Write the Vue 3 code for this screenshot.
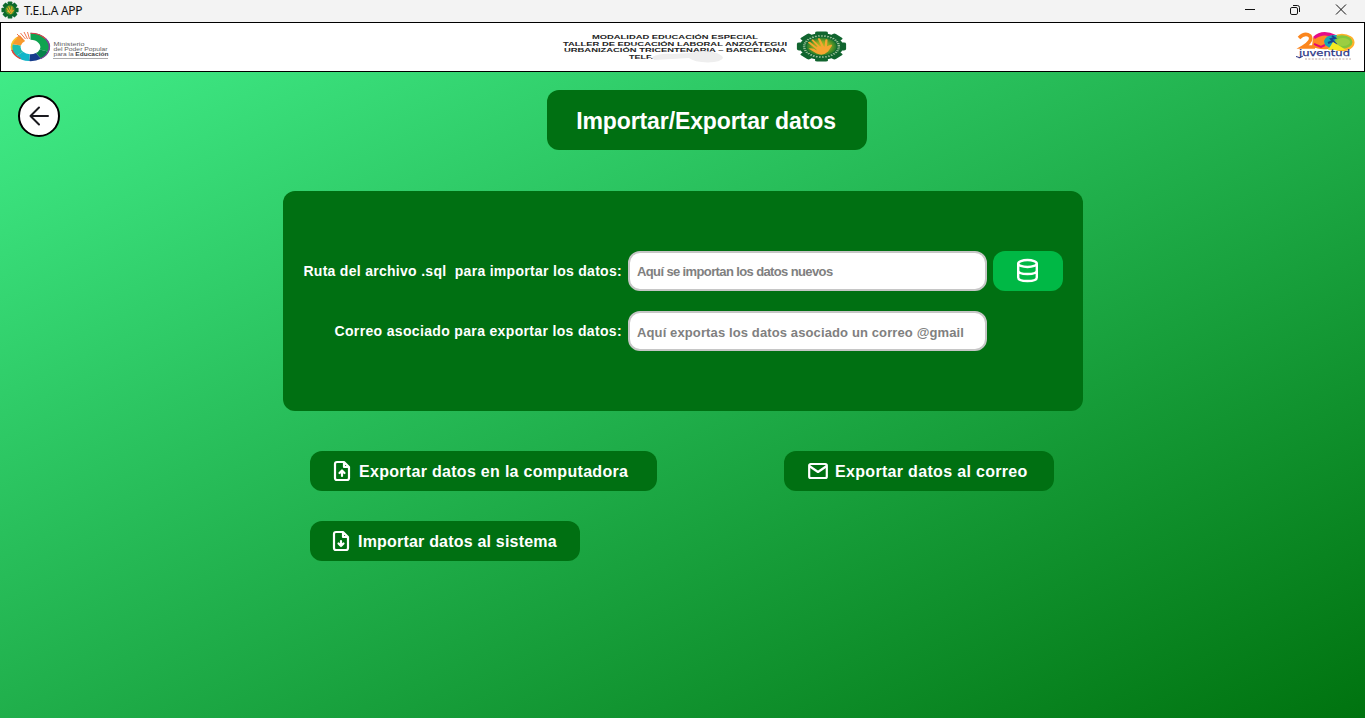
<script setup>
const teeth = [0, 45, 90, 135, 180, 225, 270, 315]
</script>

<template>
  <div class="window">
    <div class="titlebar">
      <svg class="app-icon" viewBox="-10 -10 20 20">
        <rect v-for="a in teeth" :key="a" x="-2.6" y="-9.500" width="5.2" height="5" rx="1" fill="#0d6a2e" :transform="`rotate(${a})`" />
        <circle r="7.3" fill="#0d6a2e" />
        <circle r="5.2" fill="#4f9420" />
        <path d="M-3.500 -2L0 3M-1.500 -4L1 2M2 -4L2 2M-3 1L1 4L4 0" stroke="#f2a92e" stroke-width="1.2" fill="none" />
      </svg>
      <span class="app-name">T.E.L.A APP</span>
      <div class="controls">
        <svg viewBox="0 0 12 12"><path d="M1 5.5H11" /></svg>
        <svg viewBox="0 0 12 12"><rect x="1.5" y="3.5" width="7" height="7" rx="1.4" /><path d="M4 1.5H8.4Q10.5 1.5 10.5 3.6V8" /></svg>
        <svg viewBox="0 0 12 12"><path d="M1 .5L11 10.5M11 .5L1 10.5" /></svg>
      </div>
    </div>

    <header class="banner">
      <svg class="ministry" width="104" height="40" viewBox="0 0 104 40">
        <g transform="translate(20.500 20) scale(1 .73)" fill="none" stroke-width="9.500">
          <path d="M0 -14.600A14.600 14.600 0 0 1 13.700 5" stroke="#10a350" />
          <path d="M13.700 5A14.600 14.600 0 0 1 8 12.200" stroke="#07824b" />
          <path d="M8 12.200A14.600 14.600 0 0 1 -1 14.600" stroke="#163c8c" />
          <path d="M-1 14.600A14.600 14.600 0 0 1 -11 9.600" stroke="#12b5c9" />
          <path d="M-11 9.600A14.600 14.600 0 0 1 -14.300 -3" stroke="#1dbcb0" />
          <path d="M-14.300 -3A14.600 14.600 0 0 1 -8 -12.200" stroke="#f79a2d" />
          <path d="M0 -18.800A18.800 18.800 0 0 1 15 -11.400" stroke="#e23a4e" stroke-width="1.600" />
          <path d="M15 -11.400A18.800 18.800 0 0 1 10 16" stroke="#80439b" stroke-width="1.600" />
          <path d="M-10 16A18.800 18.800 0 0 1 -18.500 4" stroke="#e94435" stroke-width="1.600" />
          <path d="M-18.500 4A18.800 18.800 0 0 1 -14 -12.500" stroke="#f8c72d" stroke-width="1.600" />
        </g>
        <path d="M13 13L7 7M15.500 12L10.500 6M17.500 12L14 5M19.500 12L17.500 5" stroke="#f0744e" stroke-width="1" />
        <g font-family="'Liberation Sans', Arial, sans-serif" fill="#606060">
          <text x="43.500" y="18.500" font-size="4.800" textLength="31" lengthAdjust="spacingAndGlyphs">Ministerio</text>
          <text x="43.500" y="23.600" font-size="4.800" textLength="54" lengthAdjust="spacingAndGlyphs">del Poder Popular</text>
          <text x="43.500" y="28.700" font-size="4.800" textLength="55" lengthAdjust="spacingAndGlyphs">para la <tspan font-weight="700" fill="#444">Educación</tspan></text>
        </g>
        <path d="M43 31.500H98" stroke="#888" stroke-width=".7" />
      </svg>

      <svg class="school" width="290" height="40" viewBox="0 0 290 40">
        <defs>
          <radialGradient id="emblem"><stop offset="0" stop-color="#c5bd20" /><stop offset=".55" stop-color="#86a822" /><stop offset="1" stop-color="#207a2c" /></radialGradient>
        </defs>
        <g font-family="'Liberation Sans', Arial, sans-serif" font-size="6.200" font-weight="700" fill="#242424">
          <text x="31" y="12" textLength="166" lengthAdjust="spacingAndGlyphs">MODALIDAD EDUCACIÓN ESPECIAL</text>
          <text x="2" y="18.700" textLength="224" lengthAdjust="spacingAndGlyphs">TALLER DE EDUCACIÓN LABORAL ANZOÁTEGUI</text>
          <text x="3" y="25.200" textLength="222" lengthAdjust="spacingAndGlyphs">URBANIZACIÓN TRICENTENARIA – BARCELONA</text>
          <text x="68" y="31.700" textLength="24" lengthAdjust="spacingAndGlyphs">TELF.</text>
        </g>
        <path d="M91 30Q99 26 112 27L129 26Q142 22 156 26Q162 29 162 31Q160 35 147 35.500Q133 35 128 31Q111 32 93 33Z" fill="#eee" />
        <g transform="translate(260.500 19.500) scale(1.640 1)">
          <rect v-for="a in teeth" :key="a" x="-3.900" y="-15" width="7.800" height="8" rx="1.300" fill="#11652f" :transform="`rotate(${a})`" />
          <circle r="13.200" fill="#11652f" />
          <circle r="10.600" fill="none" stroke="#9fc39a" stroke-width="1.500" stroke-dasharray="1 .9" />
          <circle r="9.200" fill="url(#emblem)" />
          <path d="M-7.500 -4L-2.500 2.500M-5.500 -6.500L-1 1M-1.500 -7.500L1 1M3 -6.500L2.500 2" stroke="#f7a531" stroke-width="1.400" stroke-linecap="round" />
          <path d="M-8 2Q-5 1 -3 4L-3 0L3 0L6 -2L6.500 -1L4 5Q1 10 -3 7Z" fill="#f7a531" />
        </g>
      </svg>

      <svg class="youth" width="60" height="34" viewBox="0 0 60 34">
        <path d="M17 8Q27 -1 40 6L42 14L32 19Q22 20 16 16Z" fill="#ff8a24" />
        <path d="M17 7Q26 -2 40 5L36 7Q27 3 19 9Z" fill="#e50a88" />
        <ellipse cx="46" cy="12.500" rx="12.500" ry="8.800" fill="#ffb129" />
        <ellipse cx="46" cy="12" rx="10.500" ry="6.800" fill="#82c63c" />
        <ellipse cx="47" cy="12" rx="7" ry="4" fill="#9bce42" />
        <path d="M28 11Q30 4 41 5L38 13L34 18L29 15Z" fill="#14a5b6" />
        <path d="M36 6L39 8L35 9L40 14L37 18M32 13L37 11" stroke="#174292" stroke-width="2" fill="none" />
        <path d="M37 12Q44 16 50 20H32Z" fill="#f4eb22" />
        <path d="M18 14L25 17L29 15" stroke="#e50a70" stroke-width="2" fill="none" />
        <path d="M3 8Q9 2 14 6Q17 11 7 17H19" stroke="#fb861e" stroke-width="3.600" fill="none" />
        <text x="3" y="26" font-family="'DejaVu Sans', sans-serif" font-size="9" fill="#2b3485" stroke="#2b3485" stroke-width=".25" textLength="51" lengthAdjust="spacingAndGlyphs">juventud</text>
        <path d="M9 29H55" stroke="#a88a8a" stroke-width=".8" stroke-dasharray="2 1.400" />
        <path d="M0 26.500Q4 29 7 26" stroke="#2b3485" fill="none" />
      </svg>
    </header>

    <main class="page">
      <div class="heading">
        <button class="back" aria-label="Volver">
          <svg width="22" height="22" viewBox="0 0 22 22" fill="none" stroke="#1b1b20" stroke-width="2" stroke-linecap="round" stroke-linejoin="round"><path d="M20 11H2.500M11 2.500L2.500 11L11 19.500" /></svg>
        </button>
        <h1><span>Importar/Exportar datos</span></h1>
      </div>

      <section class="panel">
        <div class="row">
          <label class="first">Ruta del archivo .sql&nbsp; para importar los datos:</label>
          <div class="field compact"><span>Aquí se importan los datos nuevos</span></div>
          <button class="database" aria-label="Base de datos">
            <svg width="24" height="26" viewBox="0 0 24 26" fill="none" stroke="#fff" stroke-width="2.400"><ellipse cx="11.500" cy="5.500" rx="9.300" ry="3.500" /><path d="M2.200 5.500V19.500C2.200 24.200 20.800 24.200 20.800 19.500V5.500M2.200 12.500C2.200 17.200 20.800 17.200 20.800 12.500" /></svg>
          </button>
        </div>
        <div class="row">
          <label>Correo asociado para exportar los datos:</label>
          <div class="field wide"><span>Aquí exportas los datos asociado un correo @gmail</span></div>
        </div>
      </section>

      <div class="actions">
        <button class="action computer">
          <svg width="18" height="22" viewBox="0 0 18 22"><path d="M4 2H11L16 7V18Q16 20 14 20H4Q2 20 2 18V4Q2 2 4 2ZM11 2V7H16M9 16V11M6.500 13L9 10.500L11.500 13" /></svg>
          <span>Exportar datos en la computadora</span>
        </button>
        <button class="action mail">
          <svg width="20" height="18" viewBox="0 0 20 18"><rect x="1.200" y="2" width="17.600" height="14" rx="1.500" /><path d="M2 4.500L10 10L18 4.500" /></svg>
          <span>Exportar datos al correo</span>
        </button>
        <button class="action import">
          <svg width="18" height="22" viewBox="0 0 18 22"><path d="M4 2H11L16 7V18Q16 20 14 20H4Q2 20 2 18V4Q2 2 4 2ZM11 2V7H16M9 11V16M6.500 13.500L9 16L11.500 13.500" /></svg>
          <span>Importar datos al sistema</span>
        </button>
      </div>
    </main>
  </div>
</template>

<style>
body { margin: 0; overflow: hidden; }
</style>

<style scoped>
* { box-sizing: border-box; }
.window { width: 1365px; height: 718px; display: flex; flex-direction: column; font-family: "Liberation Sans", Arial, sans-serif; }
button { border: 0; padding: 0; font: inherit; color: inherit; }
svg { display: block; flex-shrink: 0; }
.titlebar { height: 22px; background: #f3f3f3; display: flex; align-items: center; padding-left: 1px; }
.app-icon { width: 18px; height: 18px; margin-top: -2px; }
.app-name { margin: -2px 0 0 5px; font: 12px "Noto Sans", sans-serif; letter-spacing: -.3px; color: #111; }
.controls { margin: -3px 18px 0 auto; display: flex; gap: 34px; }
.controls svg { width: 12px; height: 12px; fill: none; stroke: #111; stroke-width: 1; }
.controls svg:nth-child(1) { margin-right: -1px; }
.banner { height: 50px; background: #fff; border: 1px solid #000; display: flex; align-items: center; padding: 0 8px; }
.ministry { margin-left: 1px; }
.school { margin: -1px 0 0 447px; }
.youth { margin: 0 0 0 auto; }
.page { flex: 1; background: linear-gradient(to bottom right, #40eb87, #00730f); }
.heading { height: 119px; display: flex; padding-left: 18px; }
.back { width: 42px; height: 42px; margin-top: 23px; border: 2px solid #000; border-radius: 50%; background: #fff; display: flex; align-items: center; justify-content: center; }
h1 { margin: 18px 0 0 487px; width: 320px; height: 60px; border-radius: 12px; background: #007012; color: #fff; display: flex; align-items: center; justify-content: center; font-size: 23px; font-weight: 700; letter-spacing: -.1px; padding: 2px 2px 0 0; }
.panel { width: 800px; height: 220px; margin-left: 283px; padding: 60px 20px; border-radius: 12px; background: #007012; display: flex; flex-direction: column; gap: 20px; }
.row { height: 40px; display: flex; align-items: center; gap: 6px; }
label { width: 319px; text-align: right; white-space: nowrap; color: #fff; font-size: 14px; font-weight: 700; letter-spacing: .34px; }
.first { letter-spacing: .29px; }
.field { width: 359px; height: 40px; border: 2px solid #c6c6c6; border-radius: 12px; background: #fff; display: flex; align-items: center; padding: 1px 0 0 7px; font-size: 13px; font-weight: 700; color: #808080; white-space: nowrap; }
.field.compact { letter-spacing: -.62px; }
.field.wide { letter-spacing: .12px; padding-top: 3px; }
.database { width: 70px; height: 40px; border-radius: 12px; background: #00b845; display: flex; align-items: center; justify-content: center; }
.actions { margin: 40px 311px 0 310px; display: grid; grid-template-columns: 347px 270px; grid-template-rows: 40px 40px; column-gap: 127px; row-gap: 30px; }
.action { height: 40px; border-radius: 12px; background: #007012; color: #fff; display: flex; align-items: center; padding-left: 23px; font-size: 16px; font-weight: 700; white-space: nowrap; }
.action svg { fill: none; stroke: #fff; stroke-width: 2.2; stroke-linecap: round; stroke-linejoin: round; }
.action span { margin-left: 8px; padding-top: 2px; letter-spacing: .3px; }
.mail { padding-left: 24px; }
.mail span { margin-left: 7px; letter-spacing: .32px; }
.import { width: 270px; padding-left: 22px; }
.import span { letter-spacing: .2px; }
</style>
